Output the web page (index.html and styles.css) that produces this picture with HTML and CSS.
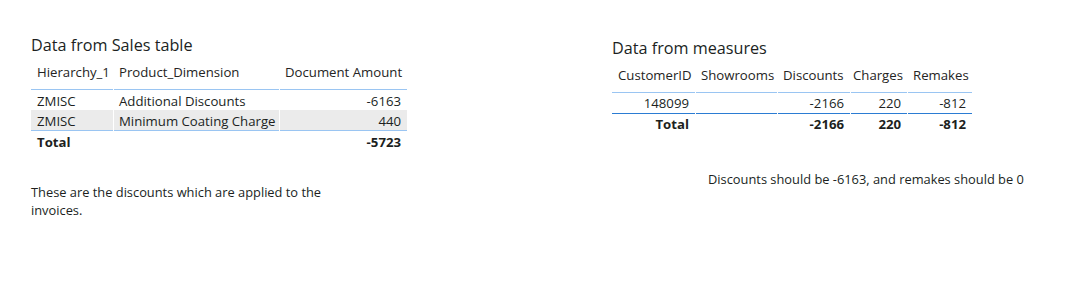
FILE: index.html
```html
<!DOCTYPE html>
<html lang="en">
<head>
<meta charset="utf-8">
<title>Report</title>
<link rel="stylesheet" href="styles.css">
</head>
<body>
<div class="canvas">
  <section class="visual visual-left">
    <h2 class="title">Data from Sales table</h2>
    <table class="grid grid-sales">
      <colgroup>
        <col class="w-h1">
        <col class="w-pd">
        <col class="w-amt">
      </colgroup>
      <thead>
        <tr>
          <th class="first">Hierarchy_1</th>
          <th>Product_Dimension</th>
          <th>Document Amount</th>
        </tr>
      </thead>
      <tbody>
        <tr>
          <td class="first">ZMISC</td>
          <td>Additional Discounts</td>
          <td class="num">-6163</td>
        </tr>
        <tr class="alt last">
          <td class="first">ZMISC</td>
          <td>Minimum Coating Charge</td>
          <td class="num">440</td>
        </tr>
      </tbody>
      <tfoot>
        <tr>
          <td class="first">Total</td>
          <td></td>
          <td class="num">-5723</td>
        </tr>
      </tfoot>
    </table>
    <p class="note note-left">These are the discounts which are applied to the invoices.</p>
  </section>

  <section class="visual visual-right">
    <h2 class="title">Data from measures</h2>
    <table class="grid grid-measures">
      <colgroup>
        <col class="w-cust">
        <col class="w-show">
        <col class="w-disc">
        <col class="w-chg">
        <col class="w-rem">
      </colgroup>
      <thead>
        <tr>
          <th class="first">CustomerID</th>
          <th>Showrooms</th>
          <th>Discounts</th>
          <th class="tight">Charges</th>
          <th>Remakes</th>
        </tr>
      </thead>
      <tbody>
        <tr>
          <td class="num">148099</td>
          <td></td>
          <td class="num">-2166</td>
          <td class="num">220</td>
          <td class="num">-812</td>
        </tr>
      </tbody>
      <tfoot>
        <tr>
          <td class="num">Total</td>
          <td></td>
          <td class="num">-2166</td>
          <td class="num">220</td>
          <td class="num">-812</td>
        </tr>
      </tfoot>
    </table>
    <p class="note note-right">Discounts should be -6163, and remakes should be 0</p>
  </section>
</div>
</body>
</html>
```

FILE: styles.css
```css
html, body {
  margin: 0;
  padding: 0;
  background: #ffffff;
}

body {
  font-family: "Open Sans", "Noto Sans", "Liberation Sans", sans-serif;
  color: #201f1e;
  width: 1080px;
  height: 289px;
  overflow: hidden;
}

.canvas {
  display: grid;
  grid-template-columns: 581px 1fr;
  padding-left: 31px;
}

.visual {
  display: flex;
  flex-direction: column;
  align-items: flex-start;
}

.visual-left {
  padding-top: 35px;
}

.visual-right {
  padding-top: 38px;
}

.title {
  margin: 0;
  font-size: 16.2px;
  line-height: 20px;
  font-weight: 400;
  color: #201f1e;
}

/* shared table look */
.grid {
  table-layout: fixed;
  border-collapse: separate;
  border-spacing: 1px 0;
  margin-left: -1px;
  font-size: 13.2px;
  color: #201f1e;
}

.grid th,
.grid td {
  box-sizing: border-box;
  white-space: nowrap;
  overflow: visible;
}

.grid th {
  font-weight: 400;
  text-align: left;
  height: 27px;
  line-height: 20px;
  padding: 0 5px 7px 5px;
  vertical-align: top;
  border-bottom: 1px solid #9ac5f2;
  color: #252423;
}

.grid td {
  height: 20px;
  padding: 2px 6px 0 5px;
  line-height: 18px;
  vertical-align: top;
}

.grid .first {
  padding-left: 6px;
}

.grid .num {
  text-align: right;
}

.grid tfoot td {
  font-weight: 700;
}

/* Sales table */
.grid-sales {
  width: 377px;
  margin-top: 7px;
}

.grid-sales .w-h1 { width: 82px; }
.grid-sales .w-pd { width: 165px; }
.grid-sales .w-amt { width: 127px; }

.grid-sales tbody tr.alt td {
  background: #ebebeb;
}

.grid-sales tbody tr.last td {
  border-bottom: 1px solid #9ac5f2;
  height: 21px;
}

/* Measures table */
.grid-measures {
  width: 362px;
  margin-top: 7px;
}

.grid-measures .w-cust { width: 83px; }
.grid-measures .w-show { width: 81px; }
.grid-measures .w-disc { width: 72px; }
.grid-measures .w-chg { width: 56px; }
.grid-measures .w-rem { width: 64px; }

.grid-measures th.tight {
  padding-left: 2px;
}

.grid-measures td {
  padding: 0 6px 0 5px;
  line-height: 20px;
}

.grid-measures tbody td {
  height: 21px;
  border-bottom: 1px solid #2b7cd3;
}

/* notes */
.note {
  margin: 0;
  font-size: 12.85px;
  line-height: 18px;
  color: #201f1e;
}

.note-left {
  width: 300px;
  margin-top: 32px;
}

.note-right {
  margin-top: 36px;
  margin-left: 96px;
}
```
